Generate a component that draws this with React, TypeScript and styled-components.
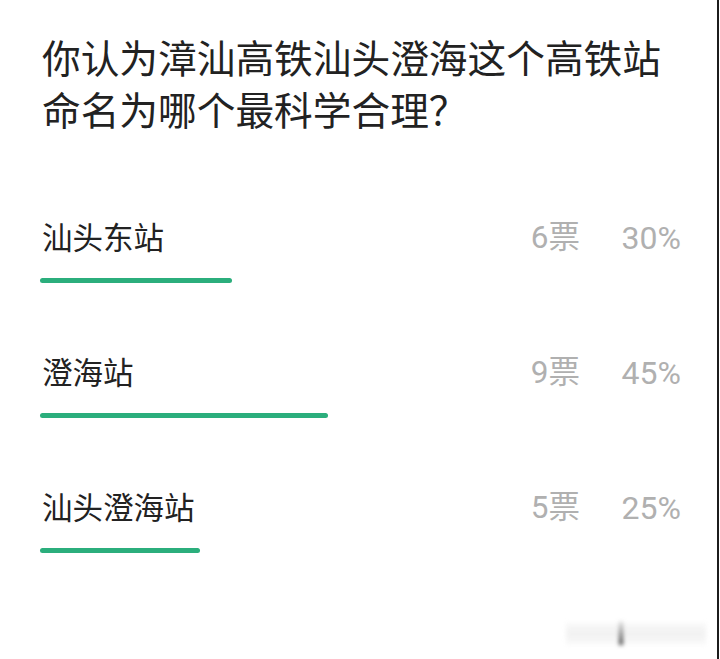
import React from 'react';
import styled, { createGlobalStyle } from 'styled-components';

type PollOption = {
	label: string;
	votes: number;
};

const options: PollOption[] = [
	{ label: '汕头东站', votes: 6 },
	{ label: '澄海站', votes: 9 },
	{ label: '汕头澄海站', votes: 5 },
];

const total = options.reduce((sum, o) => sum + o.votes, 0);

const GlobalStyle = createGlobalStyle`
	html, body {
		margin: 0;
		padding: 0;
		background: #ffffff;
	}
	* {
		box-sizing: border-box;
	}
`;

export default function App() {
	return (
		<>
			<GlobalStyle />
			<Card>
				<Question>你认为漳汕高铁汕头澄海这个高铁站命名为哪个最科学合理？</Question>
				<OptionList>
					{options.map((option) => {
						const percent = Math.round((option.votes / total) * 100);
						return (
							<OptionItem key={option.label}>
								<OptionHeader>
									<OptionLabel>{option.label}</OptionLabel>
									<VoteCount>{option.votes}票</VoteCount>
									<Percent>{percent}%</Percent>
								</OptionHeader>
								<Track>
									<Fill style={{ width: `${percent}%` }} />
								</Track>
							</OptionItem>
						);
					})}
				</OptionList>
				<Watermark>
					<WatermarkMark />
				</Watermark>
			</Card>
		</>
	);
}

const Card = styled.div`
	position: relative;
	width: 719px;
	height: 659px;
	padding: 30px 40px 0 40px;
	background: #ffffff;
	border-right: 2px solid #1c1c1c;
	font-family: 'Noto Sans CJK SC', 'Noto Sans', sans-serif;
	overflow: hidden;
`;

const Question = styled.h1`
	margin: 0;
	padding-left: 2px;
	width: 632px;
	font-size: 38.7px;
	font-weight: 400;
	line-height: 52px;
	color: #222222;
`;

const OptionList = styled.div`
	display: flex;
	flex-direction: column;
	gap: 68px;
	margin-top: 82px;
`;

const OptionItem = styled.div`
	display: flex;
	flex-direction: column;
	gap: 22px;
`;

const OptionHeader = styled.div`
	display: flex;
	align-items: center;
	height: 40px;
	margin-right: -4px;
	padding-left: 2px;
	font-size: 30.5px;
	line-height: 40px;
`;

const OptionLabel = styled.span`
	flex: 1;
	color: #222222;
`;

const VoteCount = styled.span`
	color: #b0b0b0;
	font-family: Roboto, 'Noto Sans CJK SC', sans-serif;
	font-size: 31.5px;
	margin-top: 3px;
`;

const Percent = styled.span`
	width: 101px;
	margin-top: 3px;
	text-align: right;
	color: #b0b0b0;
	font-family: Roboto, 'Noto Sans CJK SC', sans-serif;
	font-size: 32px;
`;

const Track = styled.div`
	width: 640px;
	height: 5px;
`;

const Fill = styled.div`
	height: 100%;
	border-radius: 3px;
	background: #2bae7c;
`;

const Watermark = styled.div`
	position: absolute;
	left: 566px;
	top: 623px;
	width: 140px;
	height: 22px;
	background: linear-gradient(
		to bottom,
		rgba(240, 240, 240, 0.4),
		rgba(232, 232, 232, 0.6) 50%,
		rgba(244, 244, 244, 0.4)
	);
	filter: blur(2px);
`;

const WatermarkMark = styled.div`
	position: absolute;
	left: 53px;
	top: -2px;
	width: 4px;
	height: 24px;
	background: linear-gradient(to bottom, rgba(120, 120, 120, 0.15), rgba(40, 40, 40, 0.9));
	filter: blur(0.6px);
`;
